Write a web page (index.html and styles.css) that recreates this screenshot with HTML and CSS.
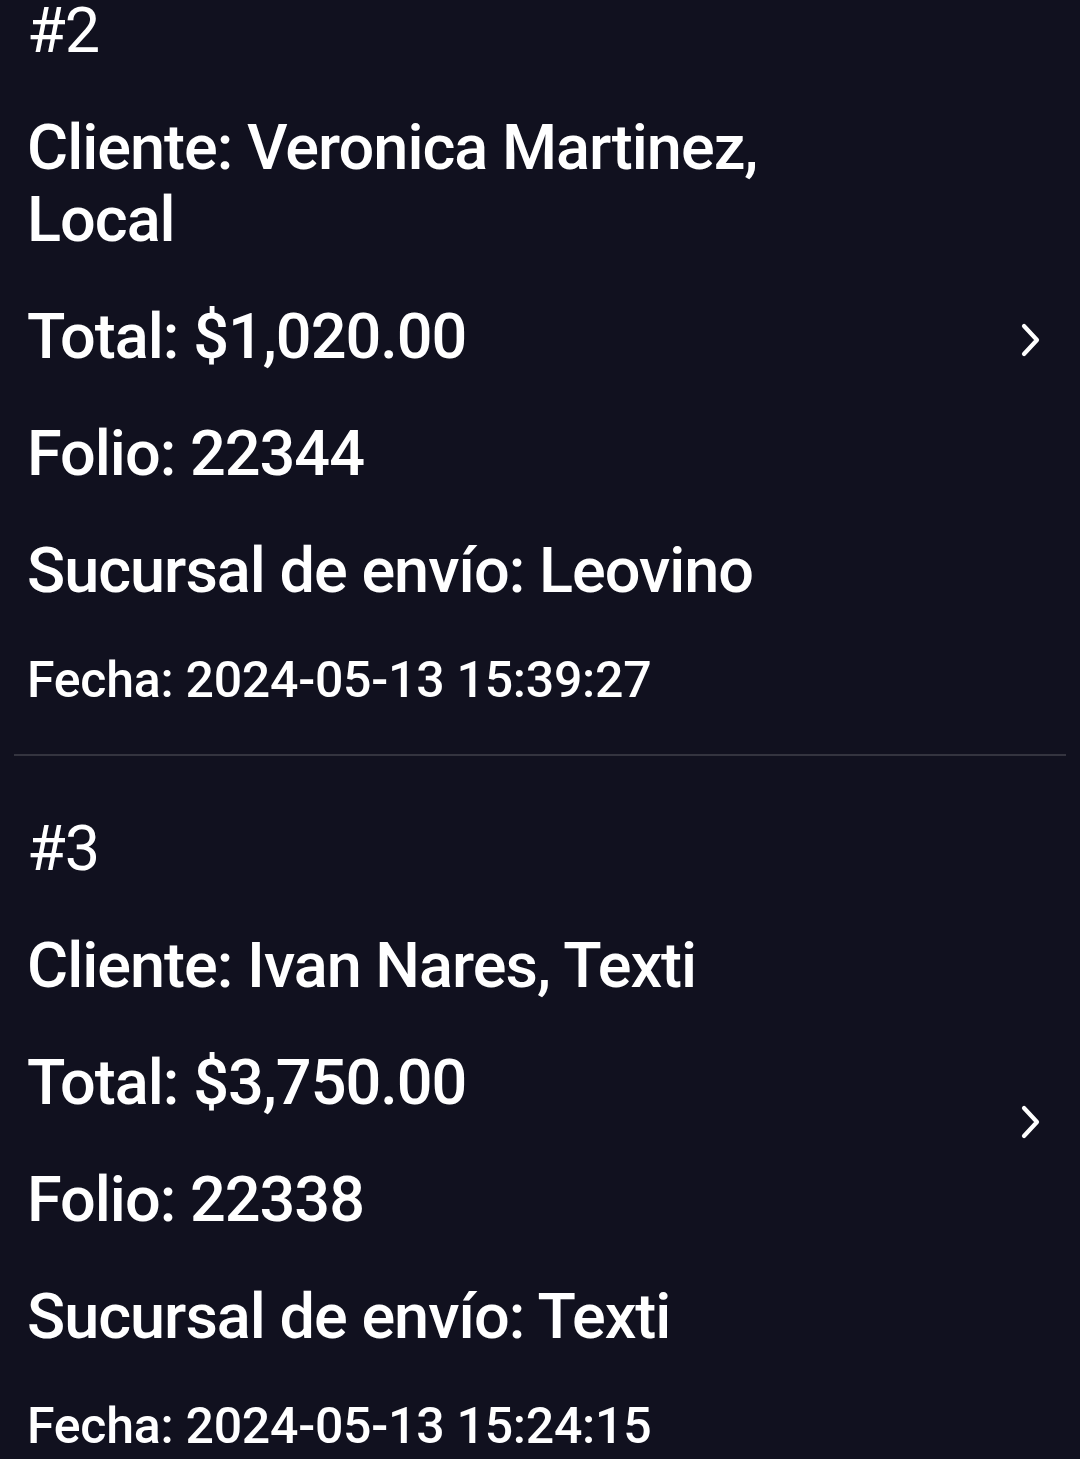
FILE: index.html
```html
<!DOCTYPE html>
<html lang="es">
<head>
    <meta charset="UTF-8">
    <meta name="viewport" content="width=device-width, initial-scale=1.0">
    <title>Pedidos</title>
    <link rel="stylesheet" href="styles.css">
</head>
<body>

    <!-- Order list (scrolled a bit) -->
    <div class="order-list">

        <div class="order">
            <div class="order-info">
                <p class="order-num">#2</p>
                <p class="line">Cliente: Veronica Martinez,<br>Local</p>
                <p class="line">Total: $1,020.00</p>
                <p class="line">Folio: 22344</p>
                <p class="line">Sucursal de envío: Leovino</p>
                <p class="date">Fecha: 2024-05-13 15:39:27</p>
            </div>
            <svg class="chevron" width="22" height="34" viewBox="0 0 22 34">
                <path d="M4 3 L17 17 L4 31" fill="none" stroke="#ffffff" stroke-width="4.2" stroke-linecap="round" stroke-linejoin="round"/>
            </svg>
        </div>

        <hr class="divider">

        <div class="order">
            <div class="order-info">
                <p class="order-num">#3</p>
                <p class="line">Cliente: Ivan Nares, Texti</p>
                <p class="line">Total: $3,750.00</p>
                <p class="line">Folio: 22338</p>
                <p class="line">Sucursal de envío: Texti</p>
                <p class="date">Fecha: 2024-05-13 15:24:15</p>
            </div>
            <svg class="chevron" width="22" height="34" viewBox="0 0 22 34">
                <path d="M4 3 L17 17 L4 31" fill="none" stroke="#ffffff" stroke-width="4.2" stroke-linecap="round" stroke-linejoin="round"/>
            </svg>
        </div>

    </div>

</body>
</html>
```

FILE: styles.css
```css
body {
    margin: 0;
    background-color: #11111f;
    color: #ffffff;
    font-family: Roboto, "Noto Sans", sans-serif;
    overflow: hidden;
}

/* list is scrolled, first card starts above the screen */
.order-list {
    margin-top: -62px;
}

.order {
    display: flex;
    align-items: center;
    padding: 57px 38px 45px 27px;
}

.order-info {
    flex: 1;
}

.order-info p {
    margin: 0;
}

.order-num {
    font-size: 63px;
    font-weight: 400;
    line-height: 72px;
    letter-spacing: -1px;
}

.line {
    font-size: 63px;
    font-weight: 500;
    line-height: 72px;
    letter-spacing: -1px;
    margin-top: 45px !important;
}

.date {
    font-size: 50px;
    font-weight: 500;
    line-height: 58px;
    margin-top: 44px !important;
    letter-spacing: -0.25px;
}

.chevron {
    display: block;
    margin-top: -24px;
}

.divider {
    border: none;
    height: 2px;
    background-color: #34343f;
    margin: 0 14px;
}
```
